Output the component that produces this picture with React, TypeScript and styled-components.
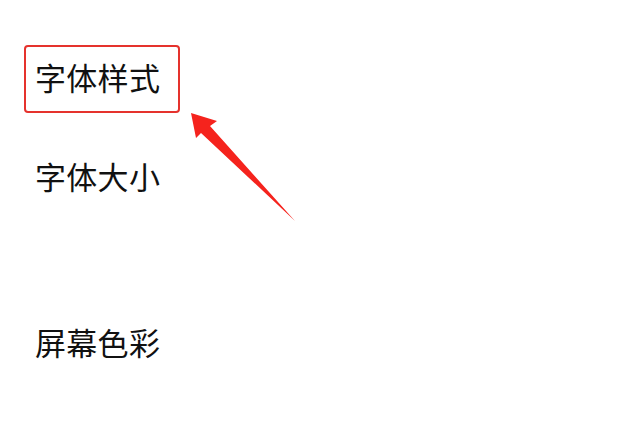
import styled, { createGlobalStyle } from 'styled-components'

const GlobalStyle = createGlobalStyle`
  html, body {
    margin: 0;
    padding: 0;
    background: #ffffff;
  }
  body {
    font-family: "Noto Sans CJK SC", "Noto Sans", sans-serif;
    color: #111111;
  }
`

const Page = styled.div`
  position: relative;
  width: 640px;
  height: 426px;
  overflow: hidden;
  box-sizing: border-box;
  padding: 45px 0 0 24px;
  display: flex;
  flex-direction: column;
  align-items: flex-start;
`

const HighlightBox = styled.div`
  box-sizing: border-box;
  width: 156px;
  height: 68px;
  border: 2px solid #e5322d;
  border-radius: 4px;
  display: flex;
  align-items: center;
  padding: 0 0 6px 9px;
`

const Row = styled.div<{ $gap: number }>`
  margin-top: ${p => p.$gap}px;
  padding-left: 11px;
`

const Label = styled.span`
  display: block;
  font-size: 31px;
  line-height: 31px;
  letter-spacing: 0.3px;
  font-weight: 400;
  white-space: nowrap;
`

const Pointer = styled.svg`
  position: absolute;
  left: 0;
  top: 0;
  pointer-events: none;
`

const settings = [
  { text: '字体大小', gap: 47 },
  { text: '屏幕色彩', gap: 135 },
]

export default function App() {
  return (
    <>
      <GlobalStyle />
      <Page>
        <HighlightBox>
          <Label>字体样式</Label>
        </HighlightBox>
        {settings.map(item => (
          <Row key={item.text} $gap={item.gap}>
            <Label>{item.text}</Label>
          </Row>
        ))}
        <Pointer width="640" height="426" viewBox="0 0 640 426">
          <polygon
            points="191,113 217,121 210,126 295,221 201,133 196,138"
            fill="#f5231d"
            strokeLinejoin="round"
          />
        </Pointer>
      </Page>
    </>
  )
}
